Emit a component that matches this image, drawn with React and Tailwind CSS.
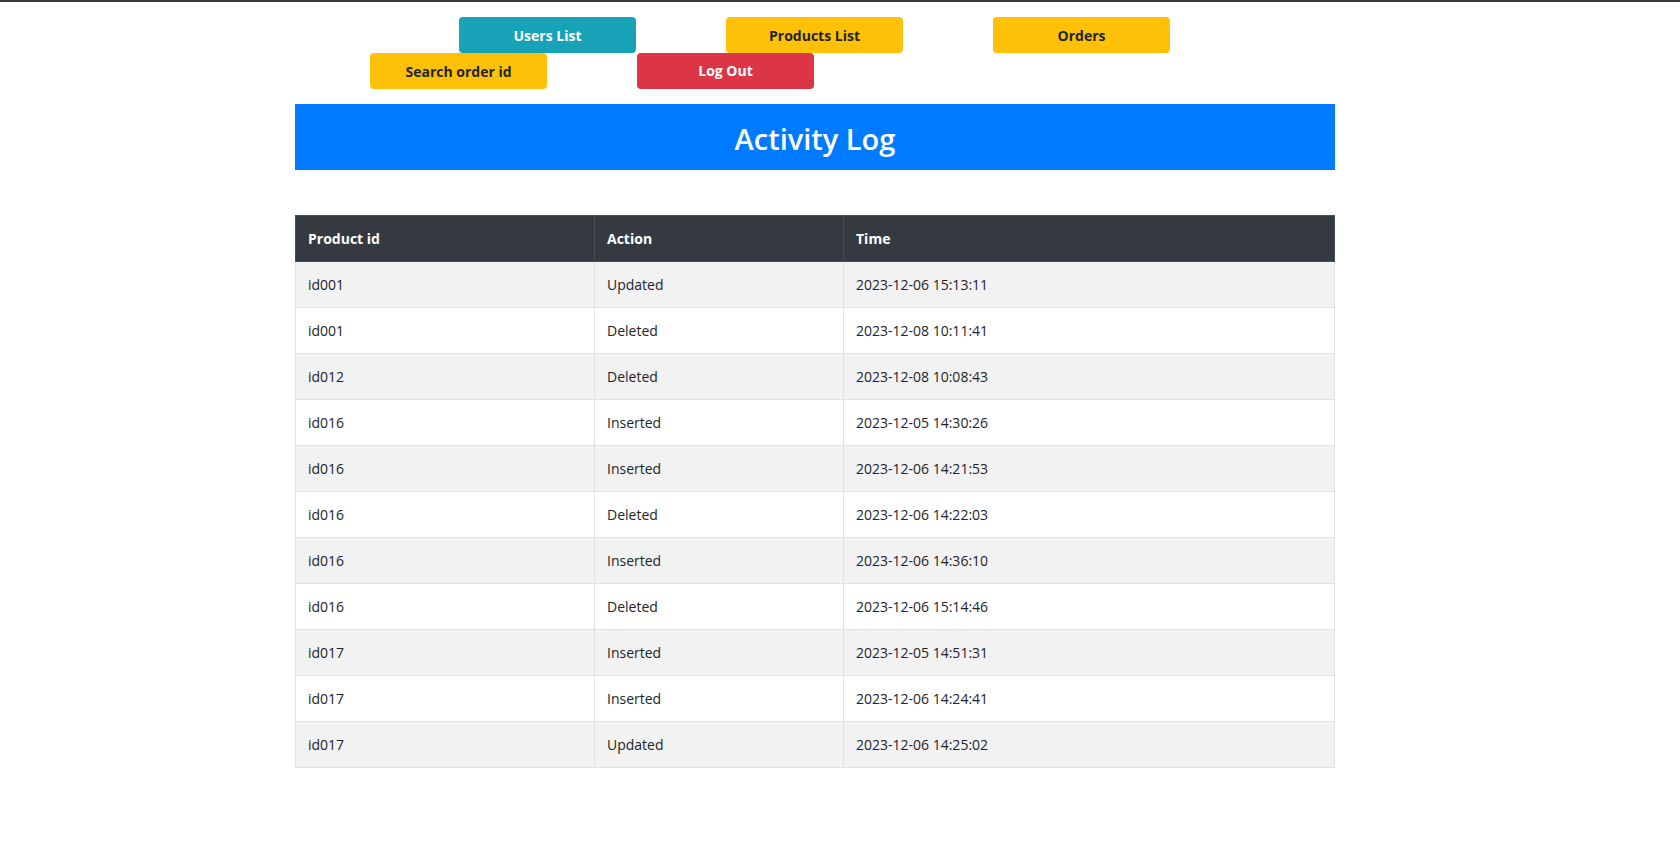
import React from 'react';

const rows = [
    ['id001', 'Updated', '2023-12-06 15:13:11'],
    ['id001', 'Deleted', '2023-12-08 10:11:41'],
    ['id012', 'Deleted', '2023-12-08 10:08:43'],
    ['id016', 'Inserted', '2023-12-05 14:30:26'],
    ['id016', 'Inserted', '2023-12-06 14:21:53'],
    ['id016', 'Deleted', '2023-12-06 14:22:03'],
    ['id016', 'Inserted', '2023-12-06 14:36:10'],
    ['id016', 'Deleted', '2023-12-06 15:14:46'],
    ['id017', 'Inserted', '2023-12-05 14:51:31'],
    ['id017', 'Inserted', '2023-12-06 14:24:41'],
    ['id017', 'Updated', '2023-12-06 14:25:02'],
];

const NavButton = ({ color, children }) => (
    <button
        className={`w-[177px] h-[36px] rounded-[4px] text-[14px] font-bold flex items-center justify-center ${color}`}
    >
        {children}
    </button>
);

const App = () => {
    return (
        <div className="min-h-[855px] bg-white border-t-2 border-[#3a3a3a] text-[#212529]" style={{ fontFamily: '"Open Sans", "Noto Sans", sans-serif' }}>
            <div className="pt-[15px]">
                <div className="flex gap-[90px] ml-[459px]">
                    <NavButton color="bg-[#17a2b8] text-white">Users List</NavButton>
                    <NavButton color="bg-[#ffc107] text-[#212529]">Products List</NavButton>
                    <NavButton color="bg-[#ffc107] text-[#212529]">Orders</NavButton>
                </div>
                <div className="flex gap-[90px] ml-[370px]">
                    <NavButton color="bg-[#ffc107] text-[#212529]">Search order id</NavButton>
                    <NavButton color="bg-[#dc3545] text-white pb-[2px]">Log Out</NavButton>
                </div>
            </div>

            <div className="ml-[295px] w-[1040px]">
                <div className="mt-[15px] h-[66px] pt-[3px] bg-[#007bff] flex items-center justify-center">
                    <h2 className="text-white text-[29px] font-semibold leading-none">Activity Log</h2>
                </div>

                <table className="mt-[45px] w-full border-collapse text-[14px]">
                    <thead>
                        <tr className="bg-[#343a40] text-white h-[46px]">
                            <th className="w-[299px] px-3 text-left font-bold border border-[#454d55]">Product id</th>
                            <th className="w-[249px] px-3 text-left font-bold border border-[#454d55]">Action</th>
                            <th className="px-3 text-left font-bold border border-[#454d55]">Time</th>
                        </tr>
                    </thead>
                    <tbody>
                        {rows.map((r, idx) => (
                            <tr key={idx} className={`h-[46px] ${idx % 2 === 0 ? 'bg-[#f2f2f2]' : 'bg-white'}`}>
                                <td className="px-3 border border-[#dee2e6]">{r[0]}</td>
                                <td className="px-3 border border-[#dee2e6]">{r[1]}</td>
                                <td className="px-3 border border-[#dee2e6]">{r[2]}</td>
                            </tr>
                        ))}
                    </tbody>
                </table>
            </div>
        </div>
    );
};

export default App;
